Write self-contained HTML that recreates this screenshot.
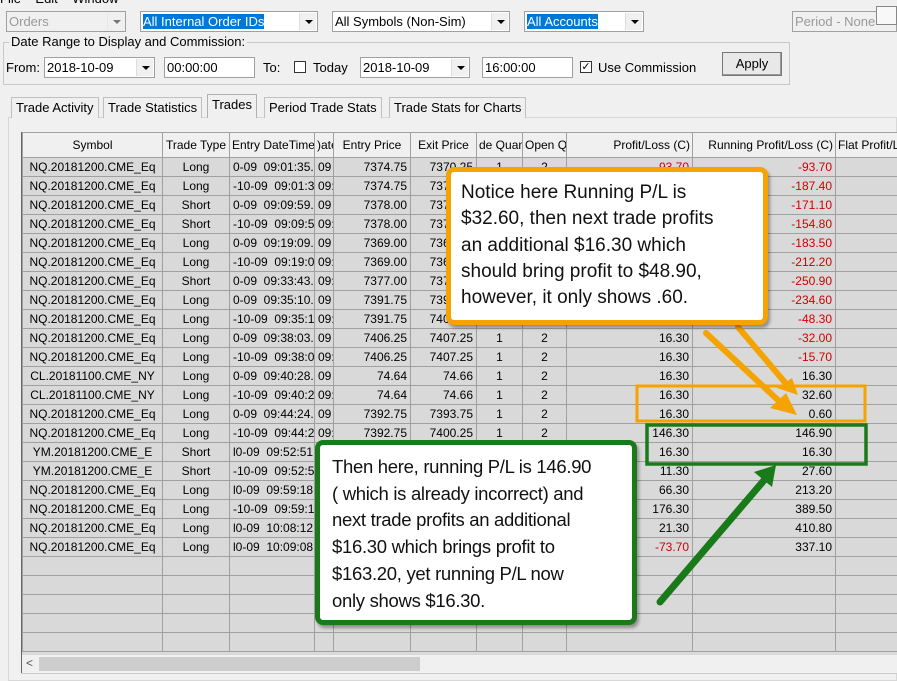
<!DOCTYPE html>
<html><head><meta charset="utf-8"><style>
*{box-sizing:border-box}
body{margin:0;width:897px;height:681px;overflow:hidden;background:#f0f0f0;font-family:"Liberation Sans",sans-serif;font-size:13px;color:#000;position:relative}
.a{position:absolute}
.cb{position:absolute;height:21px;background:#fff;border:1px solid #a0a0a0;font-size:13px;line-height:19px;padding-left:2px;white-space:nowrap;overflow:hidden}
.dd{position:absolute;right:1px;top:1px;width:17px;height:17px;background:#f0f0f0;border-left:1px solid #ddd}
.dd:after{content:"";position:absolute;left:5px;top:7px;border:4px solid transparent;border-top:4px solid #000;border-bottom:0}
.sel{background:#0078d7;color:#fff}
.tab{position:absolute;top:97px;height:21px;border:1px solid #c0c0c0;border-bottom:none;background:#f0f0f0;font-size:13px;line-height:19px;padding:0 4px}
table{border-collapse:collapse;table-layout:fixed;font-size:12px}
td{height:19px;border:1px solid #a0a0a0;padding:0 3px;white-space:nowrap;overflow:hidden;background:#d9d9d9;line-height:17px}
th{height:25px;border:1px solid #a0a0a0;font-weight:normal;background:#f0f0f0;white-space:nowrap;overflow:hidden;font-size:12px;padding:0 2px}
.r{text-align:right}.c{text-align:center}.red{color:#d00000}
.call{position:absolute;background:#fff;border-radius:8px;font-size:19px;color:#111;box-shadow:2px 3px 3px rgba(0,0,0,.35)}
</style></head><body>
<div class="a" style="left:0;top:-9px;font-size:13px">File &nbsp;&nbsp;&nbsp;Edit &nbsp;&nbsp;&nbsp;Window</div>
<div class="cb" style="left:6px;top:11px;width:120px;color:#999;background:#f0f0f0">Orders<div class="dd" style="opacity:.5"></div></div>
<div class="cb" style="left:140px;top:11px;width:178px"><span class="sel">All Internal Order IDs</span><div class="dd"></div></div>
<div class="cb" style="left:332px;top:11px;width:178px">All Symbols (Non-Sim)<div class="dd"></div></div>
<div class="cb" style="left:524px;top:11px;width:120px"><span class="sel">All Accounts</span><div class="dd"></div></div>
<div class="cb" style="left:792px;top:11px;width:105px;color:#999;background:#f0f0f0">Period - None</div>
<div class="a" style="left:876px;top:6px;width:21px;height:19px;background:#f8f8f8;border:1px solid #888"></div>
<div class="a" style="left:3px;top:42px;width:787px;height:43px;border:1px solid #c8c8c8"></div>
<div class="a" style="left:9px;top:34px;background:#f0f0f0;padding:0 2px">Date Range to Display and Commission:</div>
<div class="a" style="left:6px;top:60px">From:</div>
<div class="cb" style="left:44px;top:57px;width:111px">2018-10-09<div class="dd"></div></div>
<div class="cb" style="left:164px;top:57px;width:91px">00:00:00</div>
<div class="a" style="left:263px;top:60px">To:</div>
<div class="a" style="left:294px;top:61px;width:12px;height:12px;background:#fff;border:1px solid #333"></div>
<div class="a" style="left:313px;top:60px">Today</div>
<div class="cb" style="left:360px;top:57px;width:110px">2018-10-09<div class="dd"></div></div>
<div class="cb" style="left:482px;top:57px;width:91px">16:00:00</div>
<div class="a" style="left:580px;top:61px;width:12px;height:12px;background:#fff;border:1px solid #333;font-size:11px;line-height:10px;text-align:center">✓</div>
<div class="a" style="left:598px;top:60px">Use Commission</div>
<div class="a" style="left:722px;top:52px;width:60px;height:24px;border:1px solid #777;background:#e8e8e8;text-align:center;line-height:22px;box-shadow:inset -1px -1px #999">Apply</div>
<div class="a" style="left:8px;top:117px;width:889px;height:564px;border:1px solid #d8d8d8;background:#f0f0f0"></div>
<div class="tab" style="left:11px">Trade Activity</div>
<div class="tab" style="left:103px">Trade Statistics</div>
<div class="tab" style="left:207px;top:94px;height:24px;background:#f0f0f0;border-color:#b0b0b0">Trades</div>
<div class="tab" style="left:264px">Period Trade Stats</div>
<div class="tab" style="left:389px">Trade Stats for Charts</div>
<div class="a" style="left:21px;top:132px;width:876px;height:523px;overflow:hidden;background:#d9d9d9;border-left:1px solid #666">
<table style="width:900px">
<colgroup><col style="width:140px"><col style="width:67px"><col style="width:85px"><col style="width:19px"><col style="width:77px"><col style="width:66px"><col style="width:46px"><col style="width:44px"><col style="width:126px"><col style="width:143px"><col style="width:87px"></colgroup>
<tr><th>Symbol</th><th>Trade Type</th><th style="text-align:left">Entry DateTime</th><th style="text-align:left">)ate</th><th>Entry Price</th><th>Exit Price</th><th style="text-align:left">de Quan</th><th style="text-align:left">Open Qu</th><th class="r">Profit/Loss (C)</th><th class="r">Running Profit/Loss (C)</th><th style="text-align:left">Flat Profit/L</th></tr>
<tr><td class="c">NQ.20181200.CME_Eq</td><td class="c">Long</td><td>0-09&nbsp; 09:01:35.0</td><td>09</td><td class="r">7374.75</td><td class="r">7370.25</td><td class="c">1</td><td class="c">2</td><td class="r red">-93.70</td><td class="r red">-93.70</td><td></td></tr>
<tr><td class="c">NQ.20181200.CME_Eq</td><td class="c">Long</td><td>-10-09&nbsp; 09:01:35</td><td>09:</td><td class="r">7374.75</td><td class="r">7370.25</td><td class="c">1</td><td class="c">2</td><td class="r red">-93.70</td><td class="r red">-187.40</td><td></td></tr>
<tr><td class="c">NQ.20181200.CME_Eq</td><td class="c">Short</td><td>0-09&nbsp; 09:09:59.0</td><td>09</td><td class="r">7378.00</td><td class="r">7377.00</td><td class="c">1</td><td class="c">2</td><td class="r">16.30</td><td class="r red">-171.10</td><td></td></tr>
<tr><td class="c">NQ.20181200.CME_Eq</td><td class="c">Short</td><td>-10-09&nbsp; 09:09:59</td><td>09:</td><td class="r">7378.00</td><td class="r">7377.00</td><td class="c">1</td><td class="c">2</td><td class="r">16.30</td><td class="r red">-154.80</td><td></td></tr>
<tr><td class="c">NQ.20181200.CME_Eq</td><td class="c">Long</td><td>0-09&nbsp; 09:19:09.0</td><td>09</td><td class="r">7369.00</td><td class="r">7367.75</td><td class="c">1</td><td class="c">2</td><td class="r red">-28.70</td><td class="r red">-183.50</td><td></td></tr>
<tr><td class="c">NQ.20181200.CME_Eq</td><td class="c">Long</td><td>-10-09&nbsp; 09:19:09</td><td>09:</td><td class="r">7369.00</td><td class="r">7367.75</td><td class="c">1</td><td class="c">2</td><td class="r red">-28.70</td><td class="r red">-212.20</td><td></td></tr>
<tr><td class="c">NQ.20181200.CME_Eq</td><td class="c">Short</td><td>0-09&nbsp; 09:33:43.0</td><td>09:</td><td class="r">7377.00</td><td class="r">7379.00</td><td class="c">1</td><td class="c">2</td><td class="r red">-38.70</td><td class="r red">-250.90</td><td></td></tr>
<tr><td class="c">NQ.20181200.CME_Eq</td><td class="c">Long</td><td>0-09&nbsp; 09:35:10.0</td><td>09</td><td class="r">7391.75</td><td class="r">7392.75</td><td class="c">1</td><td class="c">2</td><td class="r">16.30</td><td class="r red">-234.60</td><td></td></tr>
<tr><td class="c">NQ.20181200.CME_Eq</td><td class="c">Long</td><td>-10-09&nbsp; 09:35:10</td><td>09:</td><td class="r">7391.75</td><td class="r">7401.25</td><td class="c">1</td><td class="c">2</td><td class="r">186.30</td><td class="r red">-48.30</td><td></td></tr>
<tr><td class="c">NQ.20181200.CME_Eq</td><td class="c">Long</td><td>0-09&nbsp; 09:38:03.0</td><td>09</td><td class="r">7406.25</td><td class="r">7407.25</td><td class="c">1</td><td class="c">2</td><td class="r">16.30</td><td class="r red">-32.00</td><td></td></tr>
<tr><td class="c">NQ.20181200.CME_Eq</td><td class="c">Long</td><td>-10-09&nbsp; 09:38:03</td><td>09:</td><td class="r">7406.25</td><td class="r">7407.25</td><td class="c">1</td><td class="c">2</td><td class="r">16.30</td><td class="r red">-15.70</td><td></td></tr>
<tr><td class="c">CL.20181100.CME_NY</td><td class="c">Long</td><td>0-09&nbsp; 09:40:28.0</td><td>09</td><td class="r">74.64</td><td class="r">74.66</td><td class="c">1</td><td class="c">2</td><td class="r">16.30</td><td class="r">16.30</td><td></td></tr>
<tr><td class="c">CL.20181100.CME_NY</td><td class="c">Long</td><td>-10-09&nbsp; 09:40:28</td><td>09:</td><td class="r">74.64</td><td class="r">74.66</td><td class="c">1</td><td class="c">2</td><td class="r">16.30</td><td class="r">32.60</td><td></td></tr>
<tr><td class="c">NQ.20181200.CME_Eq</td><td class="c">Long</td><td>0-09&nbsp; 09:44:24.0</td><td>09</td><td class="r">7392.75</td><td class="r">7393.75</td><td class="c">1</td><td class="c">2</td><td class="r">16.30</td><td class="r">0.60</td><td></td></tr>
<tr><td class="c">NQ.20181200.CME_Eq</td><td class="c">Long</td><td>-10-09&nbsp; 09:44:24</td><td>09:</td><td class="r">7392.75</td><td class="r">7400.25</td><td class="c">1</td><td class="c">2</td><td class="r">146.30</td><td class="r">146.90</td><td></td></tr>
<tr><td class="c">YM.20181200.CME_E</td><td class="c">Short</td><td>l0-09&nbsp; 09:52:51.0</td><td>09</td><td class="r">26500</td><td class="r">26497</td><td class="c">1</td><td class="c">2</td><td class="r">16.30</td><td class="r">16.30</td><td></td></tr>
<tr><td class="c">YM.20181200.CME_E</td><td class="c">Short</td><td>-10-09&nbsp; 09:52:51</td><td>09:</td><td class="r">26500</td><td class="r">26498</td><td class="c">1</td><td class="c">2</td><td class="r">11.30</td><td class="r">27.60</td><td></td></tr>
<tr><td class="c">NQ.20181200.CME_Eq</td><td class="c">Long</td><td>l0-09&nbsp; 09:59:18.0</td><td>09</td><td class="r">7390.00</td><td class="r">7393.50</td><td class="c">1</td><td class="c">2</td><td class="r">66.30</td><td class="r">213.20</td><td></td></tr>
<tr><td class="c">NQ.20181200.CME_Eq</td><td class="c">Long</td><td>-10-09&nbsp; 09:59:18</td><td>09:</td><td class="r">7390.00</td><td class="r">7399.00</td><td class="c">1</td><td class="c">2</td><td class="r">176.30</td><td class="r">389.50</td><td></td></tr>
<tr><td class="c">NQ.20181200.CME_Eq</td><td class="c">Long</td><td>l0-09&nbsp; 10:08:12.0</td><td>10</td><td class="r">7400.00</td><td class="r">7401.25</td><td class="c">1</td><td class="c">2</td><td class="r">21.30</td><td class="r">410.80</td><td></td></tr>
<tr><td class="c">NQ.20181200.CME_Eq</td><td class="c">Long</td><td>l0-09&nbsp; 10:09:08.0</td><td>10</td><td class="r">7401.00</td><td class="r">7397.50</td><td class="c">1</td><td class="c">2</td><td class="r red">-73.70</td><td class="r">337.10</td><td></td></tr>
<tr><td></td><td></td><td></td><td></td><td></td><td></td><td></td><td></td><td></td><td></td><td></td></tr>
<tr><td></td><td></td><td></td><td></td><td></td><td></td><td></td><td></td><td></td><td></td><td></td></tr>
<tr><td></td><td></td><td></td><td></td><td></td><td></td><td></td><td></td><td></td><td></td><td></td></tr>
<tr><td></td><td></td><td></td><td></td><td></td><td></td><td></td><td></td><td></td><td></td><td></td></tr>
<tr><td></td><td></td><td></td><td></td><td></td><td></td><td></td><td></td><td></td><td></td><td></td></tr>
</table></div>
<div class="a" style="left:21px;top:655px;width:876px;height:18px;background:#f0f0f0;border-left:1px solid #666"></div>
<div class="a" style="left:26px;top:656px;font-size:12px;color:#555">&lt;</div>
<div class="a" style="left:39px;top:657px;width:381px;height:14px;background:#cdcdcd"></div>
<div class="a" style="left:21px;top:673px;width:876px;height:1px;background:#ccc"></div>

<svg class="a" style="left:0;top:0" width="897" height="681">
<rect x="637" y="386" width="228" height="35" fill="none" stroke="#f5a300" stroke-width="3"/>
<rect x="647" y="425" width="219" height="39" fill="none" stroke="#1a7a1a" stroke-width="3.5"/>
<g stroke="#f5a300" stroke-width="6" stroke-linecap="round" fill="#f5a300">
<line x1="706" y1="333" x2="780" y2="402"/>
<line x1="738" y1="327" x2="788" y2="386"/>
</g>
<polygon points="797,415 770,408 786,393" fill="#f5a300"/>
<polygon points="798,395 777,388 792,378" fill="#f5a300"/>
<g stroke="#1a7a1a" stroke-width="7" stroke-linecap="round">
<line x1="660" y1="602" x2="766" y2="478"/>
</g>
<polygon points="776,465 754,472 772,487" fill="#1a7a1a"/>
</svg>

<div class="call" style="left:446px;top:167px;width:322px;height:158px;border:5px solid #f5a300;padding:8px 0 0 10px;line-height:26.3px">Notice here Running P/L is<br>$32.60, then next trade profits<br>an additional $16.30 which<br>should bring profit to $48.90,<br>however, it only shows .60.</div>
<div class="call" style="left:315px;top:440px;width:322px;height:185px;border:5px solid #1a7a1a;padding:9px 0 0 12px;line-height:26.7px;font-size:18.5px;letter-spacing:-0.3px">Then here, running P/L is 146.90<br>( which is already incorrect) and<br>next trade profits an additional<br>$16.30 which brings profit to<br>$163.20, yet running P/L now<br>only shows $16.30.</div>
</body></html>
